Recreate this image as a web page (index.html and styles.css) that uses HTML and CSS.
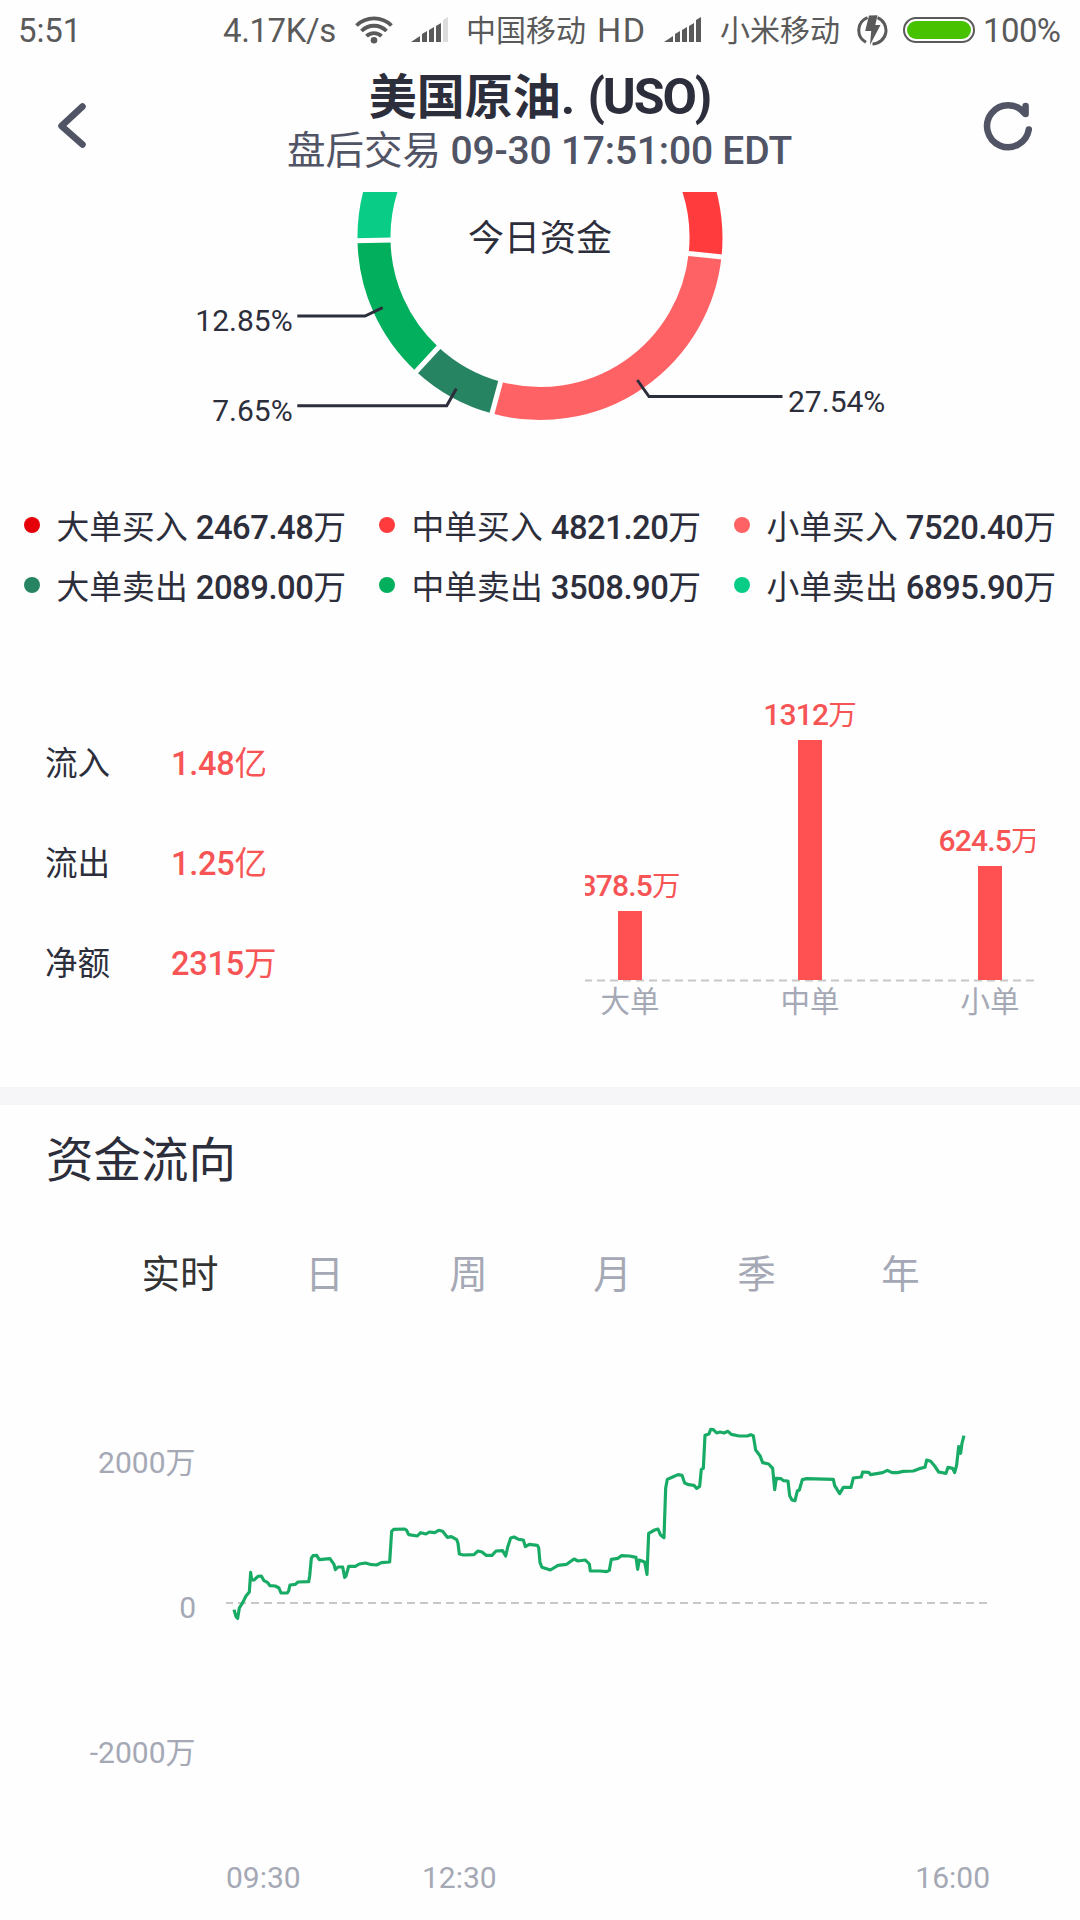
FILE: index.html
```html
<!DOCTYPE html>
<html lang="zh-CN">
<head>
<meta charset="utf-8">
<title>美国原油. (USO)</title>
<link rel="stylesheet" href="styles.css">
</head>
<body>
<div class="screen">
  <div class="status">
    <span class="status-time">5:51</span>
    <span class="status-speed">4.17K/s</span>
    <svg class="wifi" width="40" height="30" viewBox="354 15 40 30">
      <circle cx="374" cy="40.2" r="3.3"/>
      <path d="M356.5 25.5a25 25 0 0 1 35 0M361.5 31a17.5 17.5 0 0 1 25 0M366.5 36.2a10.5 10.5 0 0 1 15 0"/>
    </svg>
    <svg class="signal" width="38" height="26" viewBox="0 0 38 26">
      <path d="M0 25L9 19v6zM11 17l5-3v11h-5zM18 13l5-3v15h-5zM25 9l5-3v19h-5z"/>
      <path class="signal-off" d="M32 3l5-3v25h-5z"/>
    </svg>
    <span class="carrier">中国移动</span>
    <span class="hd">HD</span>
    <svg class="signal signal-b" width="38" height="26" viewBox="0 0 38 26">
      <path d="M0 25L9 19v6zM11 17l5-3v11h-5zM18 13l5-3v15h-5zM25 9l5-3v19h-5zM32 3l5-3v25h-5z"/>
    </svg>
    <span class="carrier carrier-b">小米移动</span>
    <svg class="charge" width="31" height="31" viewBox="857 15 31 31">
      <path class="charge-ring" d="M867.5 17.6A13.6 13.6 0 0 0 866 42.3M877.5 17.7A13.6 13.6 0 0 1 872.5 43.9"/>
      <path d="M869 15.5l8.5-.3-2.2 9.8h5.2L870 45l1.2-14h-6z"/>
    </svg>
    <span class="battery"><span class="battery-level"></span></span>
    <span class="percent">100%</span>
  </div>

  <header class="header">
    <svg class="back" width="32" height="48" viewBox="56 102 32 48"><path d="M82.5 106.5L61.5 126l21 18.5"/></svg>
    <div class="titles">
      <h1 class="title">美国原油<span class="title-latin">. (USO)</span></h1>
      <p class="subtitle">盘后交易 <span class="subtitle-latin">09-30 17:51:00 EDT</span></p>
    </div>
    <svg class="refresh" width="50" height="50" viewBox="983 101 50 50"><path d="M1025.6 106v8M1024.8 113.5A21 21 0 1 0 1028.8 129.5"/></svg>
  </header>

  <svg class="donut" width="1080" height="268" viewBox="0 192 1080 268">
    <g class="ring">
      <path stroke="#ff3b3e" d="M600 83.2A166 166 0 0 1 705.1 255.1"/>
      <path stroke="#ff6265" d="M705.1 255.1A166 166 0 0 1 496.5 397.7"/>
      <path stroke="#278463" d="M496.5 397.7A166 166 0 0 1 427.3 359.4"/>
      <path stroke="#02af5d" d="M427.3 359.4A166 166 0 0 1 374 240.4"/>
      <path stroke="#09cd86" d="M374 240.4A166 166 0 0 1 480 82.8"/>
    </g>
    <path class="gaps" d="M684 252.9L725 257.3M501.5 378.3L489.8 421.5M442 343.5L412 376M394 240L354 240.7"/>
    <path class="leader" d="M297.3 316H365l17.7-8.3M297.3 405.7H446.7l9.6-17M637.3 380l11.7 16.5h133.5"/>
    <text class="pct" x="292.7" y="331" text-anchor="end">12.85%</text>
    <text class="pct" x="292.7" y="421" text-anchor="end">7.65%</text>
    <text class="pct" x="788" y="412">27.54%</text>
    <text class="donut-title" x="540" y="251" text-anchor="middle">今日资金</text>
  </svg>

  <div class="legend">
    <div class="item"><i class="dot buy-l"></i><span>大单买入 <b>2467.48</b>万</span></div>
    <div class="item"><i class="dot buy-m"></i><span>中单买入 <b>4821.20</b>万</span></div>
    <div class="item"><i class="dot buy-s"></i><span>小单买入 <b>7520.40</b>万</span></div>
    <div class="item"><i class="dot sell-l"></i><span>大单卖出 <b>2089.00</b>万</span></div>
    <div class="item"><i class="dot sell-m"></i><span>中单卖出 <b>3508.90</b>万</span></div>
    <div class="item"><i class="dot sell-s"></i><span>小单卖出 <b>6895.90</b>万</span></div>
  </div>

  <div class="summary">
    <dl class="totals">
      <dt>流入</dt><dd><b>1.48</b>亿</dd>
      <dt>流出</dt><dd><b>1.25</b>亿</dd>
      <dt>净额</dt><dd><b>2315</b>万</dd>
    </dl>
    <svg class="bars" width="450" height="350" viewBox="585 680 450 350">
      <path class="axis" stroke-dasharray="8 5" stroke-dashoffset="1" d="M585 980.6H1034"/>
      <path class="bar" d="M618 911h24v69h-24zM798 740h24v240h-24zM978 866h24v114h-24z"/>
      <g class="bar-value" text-anchor="middle">
        <text x="630" y="896"><tspan class="num">378.5</tspan>万</text>
        <text x="810" y="725"><tspan class="num">1312</tspan>万</text>
        <text x="989" y="851"><tspan class="num">624.5</tspan>万</text>
      </g>
      <g class="bar-name" text-anchor="middle">
        <text x="630" y="1012">大单</text>
        <text x="810" y="1012">中单</text>
        <text x="990" y="1012">小单</text>
      </g>
    </svg>
  </div>

  <section class="flow">
    <h2 class="flow-title">资金流向</h2>
    <nav class="tabs">
      <span class="tab active">实时</span><span class="tab">日</span><span class="tab">周</span><span class="tab">月</span><span class="tab">季</span><span class="tab">年</span>
    </nav>
    <svg class="trend" width="1080" height="590" viewBox="0 1330 1080 590">
      <path class="axis" stroke-dasharray="8 5" stroke-dashoffset="1" d="M226 1603H987"/>
      <g transform="translate(200 1400) scale(.33333)">
        <polyline class="trend-line" points="102,629 108,650 113,655 118,624 128,608 138,588 148,576 152,517 155,540 162,540 174,529 184,528 192,542 202,547 210,557 226,558 237,564 243,579 262,579 266,572 270,555 286,553 294,546 326,545 329,528 334,475 339,467 350,466 358,479 390,476 402,493 406,509 414,501 428,501 434,532 438,528 446,499 466,499 478,492 496,489 510,493 530,495 544,488 569,486 575,394 581,388 614,387 620,391 626,404 652,408 662,398 678,402 688,396 704,398 716,391 728,394 742,412 754,410 770,419 774,430 778,462 790,465 822,464 834,453 846,456 858,466 876,466 888,453 908,452 917,468 923,442 932,414 942,411 956,418 970,420 976,440 988,433 1012,436 1016,443 1020,488 1026,502 1051,510 1074,496 1100,493 1122,477 1134,483 1156,480 1168,492 1171,513 1200,513 1220,515 1228,511 1234,478 1254,475 1264,467 1288,468 1308,472 1313,508 1318,480 1334,486 1341,523 1346,400 1364,390 1374,387 1381,404 1392,413 1397,265 1402,238 1418,231 1434,224 1446,226 1454,249 1466,254 1482,256 1490,265 1499,259 1504,208 1510,205 1515,106 1527,102 1532,88 1540,89 1550,99 1560,96 1572,99 1584,94 1594,103 1618,108 1642,108 1652,104 1660,107 1667,150 1680,167 1688,188 1706,192 1718,205 1724,269 1729,235 1743,236 1750,242 1764,243 1769,287 1776,300 1785,302 1792,273 1798,270 1807,239 1820,236 1900,238 1904,257 1919,281 1930,262 1953,262 1960,234 1984,231 1988,216 2006,217 2012,224 2048,218 2062,211 2076,218 2092,218 2110,214 2140,213 2158,206 2175,202 2180,180 2192,184 2204,198 2216,216 2238,220 2244,202 2258,205 2264,218 2270,195 2276,140 2282,160 2286,130 2292,107"/>
      </g>
      <g class="tick">
        <text x="195.5" y="1473" text-anchor="end">2000万</text>
        <text x="196" y="1618" text-anchor="end">0</text>
        <text x="195.5" y="1763" text-anchor="end">-2000万</text>
        <text x="226" y="1888">09:30</text>
        <text x="422" y="1888">12:30</text>
        <text x="990" y="1888" text-anchor="end">16:00</text>
      </g>
    </svg>
  </section>
</div>
</body>
</html>
```
FILE: styles.css
```css
* { box-sizing: border-box; }
body {
  margin: 0;
  background: #fefefe;
  color: #2d2e3b;
  font-family: Roboto, "Noto Sans CJK SC", sans-serif;
}
.screen { width: 1080px; height: 1920px; overflow: hidden; }
h1, h2, p, dl, dd { margin: 0; font-weight: 400; }

.status {
  display: flex;
  align-items: center;
  height: 60px;
  padding-left: 18px;
  color: #5a5a5a;
  font-size: 33px;
  line-height: 63px;
  white-space: nowrap;
}
.status svg { flex: none; fill: #5a5a5a; }
.status-time { width: 205px; letter-spacing: -.1px; }
.status-speed { width: 131px; letter-spacing: -.4px; }
.wifi path { fill: none; stroke: #5a5a5a; stroke-width: 3.8; }
.signal { margin-left: 17px; }
.status .signal-off { fill: #dcdcdc; }
.carrier { width: 131px; margin-left: 17px; font-size: 30px; }
.hd { width: 67px; font-size: 34px; letter-spacing: 1.5px; }
.signal-b { margin-left: 0; }
.carrier-b { width: 137px; margin-left: 18px; }
.status .charge-ring { fill: none; stroke: #5a5a5a; stroke-width: 3; }
.charge { margin: 0; }
.battery {
  width: 72px;
  height: 26px;
  margin-left: 15px;
  padding: 2px;
  border: 2px solid #5a5a5a;
  border-radius: 13px;
}
.battery-level { display: block; height: 18px; border-radius: 9px; background: #47c200; }
.percent { margin-left: 8px; letter-spacing: -.6px; }

.header {
  display: flex;
  align-items: center;
  justify-content: space-between;
  height: 132px;
  padding: 0 47px 0 56px;
}
.back, .refresh { fill: none; stroke: #505465; stroke-linecap: round; stroke-linejoin: round; stroke-width: 6.5; }
.titles { display: flex; flex-direction: column; align-items: center; width: 600px; padding-left: 8px; white-space: nowrap; }
.title { height: 56px; font-size: 48px; font-weight: 700; line-height: 59px; }
.title-latin { font-size: 50px; letter-spacing: -2.1px; word-spacing: 4px; }
.subtitle { height: 60px; color: #505465; font-size: 38.5px; line-height: 54px; }
.subtitle-latin { font-size: 39px; font-weight: 500; letter-spacing: -.2px; }

.donut { display: block; }
.ring path { fill: none; stroke-width: 33; }
.gaps { fill: none; stroke: #fefefe; stroke-width: 5; }
.leader { fill: none; stroke: #2d2e3b; stroke-width: 3; }
.pct { fill: #2d2e3b; font-size: 30px; }
.donut-title { fill: #2d2e3b; font-size: 36px; }

.legend {
  display: grid;
  grid-template-columns: repeat(3, 355px);
  grid-auto-rows: 60px;
  height: 156px;
  padding: 35px 0 0 24px;
}
.item { display: flex; align-items: center; font-size: 32.8px; white-space: pre; }
.item span { padding-bottom: 2px; }
.item b, .totals b { font-weight: 500; }
.item b { letter-spacing: -.5px; }
.dot { width: 16px; height: 16px; margin-right: 16.5px; border-radius: 50%; }
.buy-l { background: #e60009; }
.buy-m { background: #ff3b3e; }
.buy-s { background: #ff6265; }
.sell-l { background: #278463; }
.sell-m { background: #02af5d; }
.sell-s { background: #09cd86; }

.summary { display: flex; justify-content: space-between; height: 471px; padding: 64px 45px 0; }
.totals {
  display: grid;
  grid-template-columns: 126px 200px;
  grid-auto-rows: 100px;
  padding-top: 34px;
  font-size: 32.6px;
  line-height: 100px;
}
.totals dd { color: #f75555; }
.totals b { letter-spacing: -.3px; }
.axis { fill: none; stroke: #c8c8c8; stroke-width: 2; }
.bar { fill: #ff5052; }
.bar-value { fill: #f75555; font-size: 28.5px; }
.num { font-size: 30px; font-weight: 500; letter-spacing: -.8px; }
.bar-name { fill: #a5a8b5; font-size: 29.5px; }

.flow { border-top: 18px solid #f6f6f8; }
.flow-title { height: 109px; padding-left: 46px; font-size: 47.5px; line-height: 112px; }
.tabs { display: flex; height: 116px; padding: 0 108px; font-size: 38.5px; line-height: 122px; }
.tab { width: 144px; padding-left: 1px; color: #a5a8b5; text-align: center; }
.tab.active { padding: 0; color: #333; }
.trend { display: block; }
.trend-line { fill: none; stroke: #18ab65; stroke-width: 9.5; stroke-linejoin: round; }
.tick { fill: #a5a8b5; font-size: 30px; }
```
